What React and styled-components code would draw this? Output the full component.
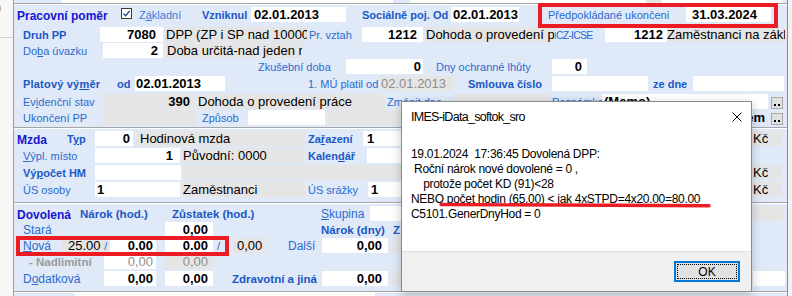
import styled, { createGlobalStyle } from 'styled-components'

const GlobalStyle = createGlobalStyle`
  html, body { margin: 0; padding: 0; }
  body { background: #f2f2f2; font-family: 'Liberation Sans', Arial, sans-serif; }
`

const tone = {
    light: '#3b7cd6',
    muted: '#9b9b9b',
    ink: '#000000',
}

const Screen = styled.div`
    position: relative;
    width: 792px;
    height: 296px;
    overflow: hidden;
    display: flex;
    background: #f2f2f2;
`

const OtherWindow = styled.div`
    width: 13px;
    flex: none;
    background: #f7f7f7;
    border-right: 1px solid #9b9b9b;
    display: flex;
    flex-direction: column;
`

const OtherTop = styled.div`
    height: 37px;
    border-bottom: 1px solid #cfcfcf;
    overflow: hidden;
`

const Peek = styled.span`
    display: block;
    margin: 1px 0 0 -6px;
    font-size: 13px;
    color: #c98a1a;
`

const Panel = styled.div`
    width: 773px;
    flex: none;
    background: #dfe9f8;
    border-right: 1px solid #8c8c8c;
    display: flex;
    flex-direction: column;
`

const Section = styled.section`
    flex: none;
    border-top: 1px solid #a5a5a5;
    padding-top: 1px;
    padding-bottom: ${p => p.$pb || 0}px;
    background: linear-gradient(#ffffff, #ffffff) top / 100% 1px no-repeat, #dfe9f8;
    display: flex;
    flex-direction: column;
`

const Row = styled.div`
    display: flex;
    align-items: flex-start;
    flex: none;
    height: ${p => p.$h || 16}px;
    margin-top: ${p => p.$mt || 0}px;
`

const Heading = styled.span`
    flex: none;
    width: ${p => p.$w}px;
    margin-left: ${p => p.$ml || 0}px;
    height: 18px;
    line-height: 18px;
    font-size: 12px;
    font-weight: 700;
    color: #1616d2;
    white-space: nowrap;
`

const Caption = styled.span`
    flex: none;
    display: block;
    box-sizing: border-box;
    width: ${p => p.$w}px;
    margin-left: ${p => p.$ml || 0}px;
    padding-left: ${p => p.$pl || 0}px;
    height: 16px;
    line-height: 16px;
    font-size: ${p => p.$size || 11}px;
    font-weight: ${p => (p.$bold ? 700 : 400)};
    color: ${p => tone[p.$tone] || (p.$bold ? '#1b58c4' : '#2b6bd0')};
    text-align: ${p => (p.$right ? 'right' : 'left')};
    letter-spacing: ${p => p.$ls || 0}px;
    white-space: nowrap;
    overflow: hidden;
`

const Field = styled.div`
    flex: none;
    box-sizing: border-box;
    width: ${p => p.$w}px;
    margin-left: ${p => p.$ml || 0}px;
    height: 15px;
    line-height: 15px;
    padding: 0 ${p => p.$pr || 0}px 0 ${p => p.$pl || 0}px;
    background: ${p => (p.$gray ? '#e5e5e5' : '#ffffff')};
    text-align: ${p => (p.$right ? 'right' : 'left')};
    font-size: 13px;
    font-weight: ${p => (p.$plain ? 400 : 700)};
    color: ${p => (p.$dim ? '#8e8e8e' : '#000000')};
    white-space: nowrap;
    overflow: hidden;
`

const Key = styled.u`
    text-decoration-thickness: 1px;
    text-underline-offset: 1px;
`

const Slash = styled.span`
    color: #2b6bd0;
    font-size: 11px;
`

const Check = styled.span`
    flex: none;
    width: 11px;
    height: 11px;
    box-sizing: border-box;
    margin-top: 1px;
    border: 1px solid #3a3a3a;
    background: #ffffff;
    display: flex;
`

const DotButton = styled.span`
    flex: none;
    width: 12px;
    height: 12px;
    box-sizing: border-box;
    margin: 3px 0 0 ${p => p.$ml || 0}px;
    padding-bottom: 2px;
    background: #e1e1e1;
    border: 1px solid #a8a8a8;
    display: flex;
    align-items: flex-end;
    justify-content: center;
    gap: 2px;
    &::before, &::after {
        content: '';
        width: 2px;
        height: 2px;
        background: #000;
    }
`

const Dialog = styled.div`
    position: absolute;
    left: 401px;
    top: 101px;
    width: 351px;
    height: 191px;
    box-sizing: border-box;
    background: #ffffff;
    border: 1px solid #8a8a8a;
    box-shadow: 0 3px 10px rgba(0, 0, 0, 0.22);
    display: flex;
    flex-direction: column;
    color: #000;
`

const DialogHead = styled.div`
    height: 29px;
    flex: none;
    display: flex;
    align-items: center;
    justify-content: space-between;
    padding: 0 9px;
    font-size: 12.5px;
    letter-spacing: -0.7px;
`

const DialogBody = styled.div`
    flex: 1;
    padding: 16px 0 0 9px;
    font-size: 12px;
    line-height: 15px;
    letter-spacing: -0.3px;
    white-space: pre;
`

const DialogFoot = styled.div`
    height: 40px;
    flex: none;
    box-sizing: border-box;
    border-top: 1px solid #dfdfdf;
    background: #f0f0f0;
    display: flex;
    justify-content: flex-end;
    align-items: flex-start;
    padding: 9px 11px 0 0;
`

const OkButton = styled.button`
    position: relative;
    width: 66px;
    height: 21px;
    box-sizing: border-box;
    padding: 0;
    border: 2px solid #0078d7;
    background: #e1e1e1;
    font-family: 'Liberation Sans', Arial, sans-serif;
    font-size: 12px;
    color: #000;
    &::after {
        content: '';
        position: absolute;
        inset: 1px;
        border: 1px dotted #000;
    }
`

const Mark = styled.div`
    position: absolute;
    left: ${p => p.$x}px;
    top: ${p => p.$y}px;
    width: ${p => p.$w}px;
    height: ${p => p.$h}px;
    box-sizing: border-box;
    border: 4px solid #ec1c24;
    pointer-events: none;
`

const Stroke = styled.svg`
    position: absolute;
    left: 438px;
    top: 201px;
`

function Employment() {
    return (
        <Section $pb={1}>
            <Row $mt={2}>
                <Heading $ml={3} $w={104}>Pracovní poměr</Heading>
                <Check>
                    <svg width="9" height="9" viewBox="0 0 9 9">
                        <path d="M1.5 4.6 L3.6 6.8 L7.6 2" fill="none" stroke="#1d3f86" strokeWidth="1.3" />
                    </svg>
                </Check>
                <Caption $ml={7} $w={63} $tone="light">Z<Key>á</Key>kladní</Caption>
                <Caption $bold $w={49}>Vzniknul</Caption>
                <Field $w={95} $pl={3}>02.01.2013</Field>
                <Caption $bold $ml={16} $w={89}>Sociálně poj. Od</Caption>
                <Field $w={68} $pl={2}>02.01.2013</Field>
                <Caption $ml={29} $w={138}>Předpokládané ukončeni</Caption>
                <Field $w={85} $pl={6}>31.03.2024</Field>
            </Row>
            <Row $mt={4}>
                <Caption $bold $ml={9} $w={77}>Druh PP</Caption>
                <Field $w={63} $right $pr={7}>7080</Field>
                <Field $gray $plain $ml={2} $w={142} $pl={1}>DPP (ZP i SP nad 10000 Kč)</Field>
                <Caption $ml={2} $w={53}>Pr. vztah</Caption>
                <Field $w={61} $right $pr={6}>1212</Field>
                <Field $gray $plain $ml={2} $w={131} $pl={1}>Dohoda o provedení práce</Field>
                <Caption $w={49} $size={10.5} $ls={-0.8}>CZ-ICSE</Caption>
                <Field $w={62} $right $pr={4}>1212</Field>
                <Field $gray $plain $w={118}>Zaměstnanci na základě</Field>
            </Row>
            <Row>
                <Caption $ml={9} $w={80}>Do<Key>b</Key>a úvazku</Caption>
                <Field $w={60} $right $pr={5}>2</Field>
                <Field $gray $plain $ml={3} $w={136} $pl={1}>Doba určitá-nad jeden rok</Field>
            </Row>
            <Row>
                <Caption $ml={244} $w={88}>Zkušební doba</Caption>
                <Field $w={77} $right $pr={2}>0</Field>
                <Caption $ml={13} $w={116}>Dny ochranné lhůty</Caption>
                <Field $w={35} $right $pr={5}>0</Field>
            </Row>
            <Row $mt={1}>
                <Caption $bold $ml={9} $w={94} $ls={0.2}>Platový vý<Key>m</Key>ěr</Caption>
                <Caption $bold $w={18}>od</Caption>
                <Field $w={90} $pl={1}>02.01.2013</Field>
                <Caption $ml={83} $w={72}>1. MÚ platil od</Caption>
                <Field $gray $plain $dim $w={73} $pl={1}>02.01.2013</Field>
                <Caption $bold $ml={15} $w={84}>Smlouva číslo</Caption>
                <Field $w={96} />
                <Caption $bold $ml={5} $w={40}>ze dne</Caption>
                <Field $w={91} />
            </Row>
            <Row $mt={2}>
                <Caption $ml={9} $w={80}>Ev<Key>i</Key>denční stav</Caption>
                <Field $gray $w={92} $right $pr={5}>390</Field>
                <Field $gray $plain $ml={2} $w={188} $pl={1}>Dohoda o provedení práce</Field>
                <Caption $ml={2} $w={66}>Změnit dne</Caption>
                <Field $gray $w={94} />
                <Caption $ml={5} $w={50}>Poznámka</Caption>
                <Field $w={166} $pl={2}>(Memo)</Field>
                <DotButton $ml={3} />
            </Row>
            <Row>
                <Caption $ml={9} $w={80}>Ukončení PP</Caption>
                <Field $gray $w={92} />
                <Caption $ml={7} $w={46}>Způsob</Caption>
                <Field $w={77} />
                <Field $gray $ml={3} $w={220} />
                <Caption $bold $tone="ink" $size={13} $right $ml={4} $w={213}>Problem</Caption>
                <DotButton $ml={6} />
            </Row>
        </Section>
    )
}

function Wage() {
    return (
        <Section $pb={4}>
            <Row $mt={2}>
                <Heading $ml={3} $w={50}>Mzda</Heading>
                <Caption $bold $w={28}>T<Key>y</Key>p</Caption>
                <Field $w={38} $right $pr={3}>0</Field>
                <Field $gray $plain $ml={3} $w={169} $pl={4}>Hodinová mzda</Field>
                <Caption $bold $ml={3} $w={55}>Za<Key>ř</Key>azení</Caption>
                <Field $w={187} $pl={4}>1</Field>
                <Field $gray $plain $ml={202} $w={30} $pl={1}>Kč</Field>
            </Row>
            <Row $mt={1}>
                <Caption $ml={9} $w={72}><Key>V</Key>ýpl. místo</Caption>
                <Field $w={85} $right $pr={7}>1</Field>
                <Field $gray $plain $ml={2} $w={123} $pl={1}>Původní: 0000</Field>
                <Caption $bold $ml={3} $w={59}>Kalen<Key>d</Key>ář</Caption>
                <Field $w={183} />
            </Row>
            <Row $mt={1}>
                <Caption $bold $ml={9} $w={72}>Vý<Key>p</Key>očet HM</Caption>
                <Field $w={86} />
                <Field $gray $ml={2} $w={367} />
                <Field $gray $plain $ml={202} $w={30} $pl={1}>Kč</Field>
            </Row>
            <Row $mt={1}>
                <Caption $ml={9} $w={72}>ÚS osoby</Caption>
                <Field $w={85} $pl={2}>1</Field>
                <Field $gray $plain $ml={2} $w={123} $pl={1}>Zaměstnanci</Field>
                <Caption $ml={3} $w={60}>ÚS srážky</Caption>
                <Field $w={182} $pl={3}>1</Field>
                <Field $gray $plain $ml={202} $w={30} $pl={1}>Kč</Field>
            </Row>
        </Section>
    )
}

function Leave() {
    return (
        <Section $pb={4}>
            <Row $mt={2}>
                <Heading $ml={3} $w={63}>Dovolená</Heading>
                <Caption $bold $size={11.5} $w={92}>Nárok (hod.)</Caption>
                <Caption $bold $size={11.5} $w={149}>Zůstatek (hod.)</Caption>
                <Caption $size={12} $w={49}><Key>S</Key>kupina</Caption>
                <Field $w={180} />
                <Field $gray $ml={203} $w={30} />
            </Row>
            <Row>
                <Caption $size={12} $ml={9} $w={142}>Stará</Caption>
                <Field $w={48} $right $pr={5}>0,00</Field>
                <Caption $bold $size={11.5} $ml={108} $w={72}>Nárok (dny)</Caption>
                <Caption $bold $size={11.5} $w={20}>Z</Caption>
            </Row>
            <Row>
                <Caption $size={12} $ml={9} $w={39}><Key>N</Key>ová</Caption>
                <Field $gray $plain $w={46} $pl={6}>25.00 <Slash>/</Slash></Field>
                <Field $ml={2} $w={46} $right $pr={3}>0.00</Field>
                <Field $ml={9} $w={48} $right $pr={5}>0.00</Field>
                <Caption $ml={1} $w={19} $pl={3}>/</Caption>
                <Field $gray $plain $w={32} $pl={4}>0,00</Field>
                <Caption $size={12} $ml={23} $w={34}>Další</Caption>
                <Field $w={66} $right $pr={6}>0,00</Field>
                <Field $gray $ml={4} $w={158} />
            </Row>
            <Row>
                <Caption $bold $size={11.5} $tone="muted" $ml={15} $w={75}>- Nadlimitní</Caption>
                <Field $plain $dim $w={52} $right $pr={3}>0,00</Field>
                <Field $gray $plain $dim $ml={9} $w={48} $right $pr={5}>0,00</Field>
            </Row>
            <Row $mt={1}>
                <Caption $size={12} $ml={9} $w={81}>D<Key>o</Key>datková</Caption>
                <Field $w={52} $right $pr={3}>0,00</Field>
                <Field $ml={9} $w={48} $right $pr={5}>0,00</Field>
                <Caption $bold $size={11.5} $ml={19} $w={90}>Zdravotní a jiná</Caption>
                <Field $w={66} $right $pr={6}>0,00</Field>
                <Field $gray $ml={4} $w={158} />
                <Field $ml={203} $w={32} />
            </Row>
        </Section>
    )
}

function LeaveDialog() {
    return (
        <Dialog>
            <DialogHead>
                <span>IMES-iData_softok_sro</span>
                <svg width="10" height="10" viewBox="0 0 10 10">
                    <path d="M0.5 0.5 L9.5 9.5 M9.5 0.5 L0.5 9.5" stroke="#000" strokeWidth="1" fill="none" />
                </svg>
            </DialogHead>
            <DialogBody>
{`19.01.2024  17:36:45 Dovolená DPP:
 Roční nárok nové dovolené = 0 ,
    protože počet KD (91)<28
NEBO počet hodin (65.00) < jak 4xSTPD=4x20.00=80.00
C5101.GenerDnyHod = 0`}
            </DialogBody>
            <DialogFoot>
                <OkButton>OK</OkButton>
            </DialogFoot>
        </Dialog>
    )
}

export default function App() {
    return (
        <>
            <GlobalStyle />
            <Screen>
                <OtherWindow>
                    <OtherTop>
                        <Peek>0</Peek>
                    </OtherTop>
                </OtherWindow>
                <Panel>
                    <Row $h={3}>
                        <Field $ml={48} $w={331} />
                        <Field $ml={17} $w={236} />
                        <Field $gray $w={16} />
                        <Field $w={121} />
                    </Row>
                    <Employment />
                    <Wage />
                    <Leave />
                    <Section>
                        <Row $h={4}>
                            <Field $ml={61} $w={300} />
                        </Row>
                    </Section>
                </Panel>
                <LeaveDialog />
                <Mark $x={538} $y={3} $w={240} $h={25} />
                <Mark $x={16} $y={236} $w={213} $h={20} />
                <Stroke width="276" height="8" viewBox="0 0 276 8">
                    <path d="M3 3.5 L271 4.8" stroke="#ec1c24" strokeWidth="3.4" strokeLinecap="round" fill="none" />
                </Stroke>
            </Screen>
        </>
    )
}
